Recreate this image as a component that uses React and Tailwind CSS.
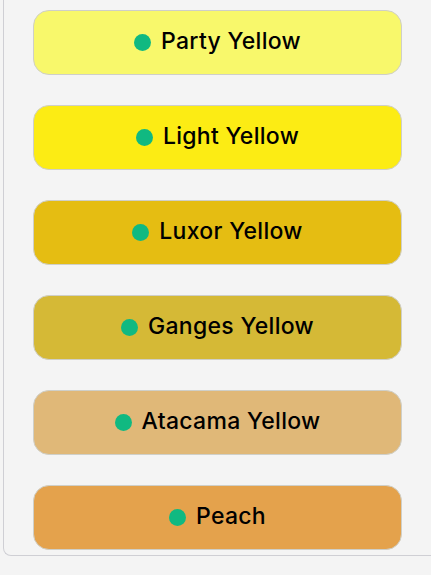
import React from 'react';

const colors = [
  { name: 'Party Yellow', bg: 'bg-[#f8f86b]' },
  { name: 'Light Yellow', bg: 'bg-[#fcec14]' },
  { name: 'Luxor Yellow', bg: 'bg-[#e5bd12]' },
  { name: 'Ganges Yellow', bg: 'bg-[#d5b936]' },
  { name: 'Atacama Yellow', bg: 'bg-[#e0b878]' },
  { name: 'Peach', bg: 'bg-[#e4a24c]' },
];

export default function App() {
  return (
    <div className="w-[431px] h-[575px] overflow-hidden bg-[#f4f4f4]" style={{ fontFamily: 'Inter, "Open Sans", sans-serif' }}>
      <div className="ml-[3px] w-[460px] border-l border-b border-[#cfcfd4] rounded-bl-lg pl-[29px] pt-[10px] pb-[5px] flex flex-col gap-[30px]">
        {colors.map((c) => (
          <div
            key={c.name}
            className={`w-[369px] h-[65px] rounded-[16px] border border-[#cfcfc8] ${c.bg} flex items-center justify-center gap-[10px]`}
          >
            <span className="w-[17px] h-[17px] rounded-full bg-[#10b981] shrink-0" />
            <span className="text-[23px] font-medium text-black tracking-[0.3px] leading-none -mt-[2px]">{c.name}</span>
          </div>
        ))}
      </div>
    </div>
  );
}
